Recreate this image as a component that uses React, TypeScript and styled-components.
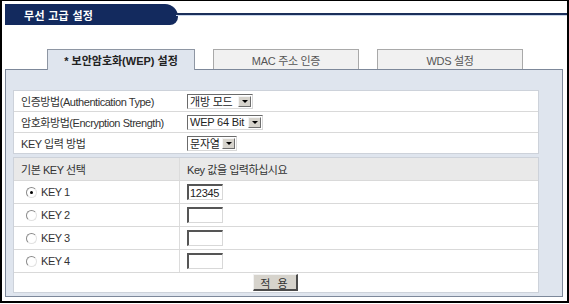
import styled, { createGlobalStyle } from 'styled-components'

const GlobalStyle = createGlobalStyle`
  body {
    margin: 0;
    background: #fff;
    font-family: "Liberation Sans", "Noto Sans CJK KR", sans-serif;
    font-size: 11px;
    color: #333;
  }
`;

const Frame = styled.div`
  width: 569px;
  height: 303px;
  box-sizing: border-box;
  border: 2px solid #000;
  border-top-width: 1px;
  background: #fff;
`;

const Header = styled.div`
  display: flex;
  align-items: center;
  margin-top: 3px;
  padding-left: 3px;
`;

const TitleBand = styled.div`
  width: 173px;
  height: 21px;
  box-sizing: border-box;
  padding-left: 19px;
  display: flex;
  align-items: center;
  background: #132a5e;
  color: #fff;
  font-weight: bold;
  letter-spacing: 0.3px;
  border-radius: 0 16px 10px 0;
  flex-shrink: 0;
`;

const TitleLine = styled.div`
  flex: 1;
  height: 2px;
  background: #1b2f5a;
  border-bottom: 1px solid #c9d6ea;
  margin-left: -2px;
`;

const TabRow = styled.div`
  display: flex;
  gap: 18px;
  margin-top: 24px;
  padding-left: 45px;
  height: 20px;
  position: relative;
  z-index: 1;
`;

const Tab = styled.div<{ $active?: boolean }>`
  width: ${({ $active }) => ($active ? 148 : 146)}px;
  box-sizing: border-box;
  display: flex;
  align-items: center;
  justify-content: center;
  border: 1px solid ${({ $active }) => ($active ? '#8e96a3' : '#a9a9a9')};
  border-bottom: none;
  background: ${({ $active }) => ($active ? '#dfe5ee' : '#f1f1f1')};
  color: ${({ $active }) => ($active ? '#222' : '#555')};
  font-weight: ${({ $active }) => ($active ? 'bold' : 'normal')};
  letter-spacing: ${({ $active }) => ($active ? '0' : '-0.3px')};
  height: ${({ $active }) => ($active ? 21 : 20)}px;
`;

const Panel = styled.div`
  margin-left: 3px;
  width: 558px;
  height: 228px;
  box-sizing: border-box;
  border: 1px solid #7d889a;
  background: #dfe5ee;
  padding: 20px 23px 3px 7px;
  display: flex;
  flex-direction: column;
  gap: 3px;
`;

const Table = styled.div`
  background: #fff;
  border: 1px solid #cdd2da;
`;

const Row = styled.div<{ $h: number; $head?: boolean }>`
  display: grid;
  grid-template-columns: 166px 1fr;
  height: ${({ $h }) => $h}px;
  box-sizing: border-box;
  background: ${({ $head }) => ($head ? '#e9e9e9' : '#fff')};
  & + & {
    border-top: 1px solid #d9d9d9;
  }
`;

const Cell = styled.div<{ $divider?: boolean; $pad?: number }>`
  display: flex;
  align-items: center;
  padding-left: ${({ $pad }) => $pad ?? 7}px;
  letter-spacing: -0.45px;
  color: #333;
  border-right: ${({ $divider }) => ($divider ? '1px solid #dcdcdc' : 'none')};
`;

const ButtonRow = styled.div`
  display: flex;
  justify-content: center;
  align-items: center;
  height: 20px;
  box-sizing: border-box;
  border-top: 1px solid #d9d9d9;
`;

const SelectBox = styled.div<{ $w: number }>`
  width: ${({ $w }) => $w}px;
  height: 15px;
  box-sizing: border-box;
  display: flex;
  align-items: center;
  justify-content: space-between;
  background: #fff;
  border-top: 1px solid #6b6b6b;
  border-left: 1px solid #6b6b6b;
  border-right: 1px solid #d8d8d8;
  border-bottom: 1px solid #d8d8d8;
  padding-left: 2px;
  padding-right: 1px;
  letter-spacing: -0.2px;
  color: #222;
`;

const Arrow = styled.span`
  width: 13px;
  height: 11px;
  box-sizing: border-box;
  background: #d6d3cc;
  border-top: 1px solid #f4f4f4;
  border-left: 1px solid #f4f4f4;
  border-right: 1px solid #6e6e6e;
  border-bottom: 1px solid #6e6e6e;
  display: flex;
  align-items: center;
  justify-content: center;
  &::after {
    content: '';
    border-left: 3px solid transparent;
    border-right: 3px solid transparent;
    border-top: 3px solid #000;
  }
`;

const KeyInput = styled.input`
  width: 36px;
  height: 16px;
  box-sizing: border-box;
  margin: 0;
  padding: 0 1px;
  font: inherit;
  font-size: 11px;
  letter-spacing: -0.3px;
  color: #222;
  border-top: 2px solid #555;
  border-left: 2px solid #555;
  border-right: 1px solid #d8d8d8;
  border-bottom: 1px solid #d8d8d8;
  outline: none;
  background: #fff;
`;

const Radio = styled.span<{ $on?: boolean }>`
  width: 9px;
  height: 9px;
  margin-right: 4px;
  border-radius: 50%;
  border: 1px solid #8a8a8a;
  border-right-color: #e2e2e2;
  border-bottom-color: #e2e2e2;
  background: #fff;
  display: inline-flex;
  align-items: center;
  justify-content: center;
  &::after {
    content: '';
    width: 3px;
    height: 3px;
    border-radius: 50%;
    background: ${({ $on }) => ($on ? '#000' : 'transparent')};
  }
`;

const ApplyButton = styled.button`
  width: 45px;
  height: 17px;
  margin: 0 0 0 -1px;
  padding: 0;
  font: inherit;
  font-size: 11px;
  letter-spacing: 2px;
  color: #333;
  background: #d6d3cc;
  border-top: 1px solid #f2f2f2;
  border-left: 1px solid #f2f2f2;
  border-right: 2px solid #4b4b4b;
  border-bottom: 2px solid #4b4b4b;
`;

const tabs = ['* 보안암호화(WEP) 설정', 'MAC 주소 인증', 'WDS 설정'];

const settings = [
  { label: '인증방법(Authentication Type)', value: '개방 모드', width: 66 },
  { label: '암호화방법(Encryption Strength)', value: 'WEP 64 Bit', width: 76 },
  { label: 'KEY 입력 방법', value: '문자열', width: 50 },
];

const keys = [
  { name: 'KEY 1', value: '12345', on: true },
  { name: 'KEY 2', value: '' },
  { name: 'KEY 3', value: '' },
  { name: 'KEY 4', value: '' },
];

function App() {
  return (
    <>
      <GlobalStyle />
      <Frame>
        <Header>
          <TitleBand>무선 고급 설정</TitleBand>
          <TitleLine />
        </Header>
        <TabRow>
          {tabs.map((t, i) => (
            <Tab key={t} $active={i === 0}>{t}</Tab>
          ))}
        </TabRow>
        <Panel>
          <Table>
            {settings.map((s, i) => (
              <Row key={s.label} $h={i === 0 ? 20 : 21}>
                <Cell>{s.label}</Cell>
                <Cell>
                  <SelectBox $w={s.width}>
                    {s.value}
                    <Arrow />
                  </SelectBox>
                </Cell>
              </Row>
            ))}
          </Table>
          <Table>
            <Row $h={22} $head>
              <Cell $divider>기본 KEY 선택</Cell>
              <Cell>Key 값을 입력하십시요</Cell>
            </Row>
            {keys.map((k) => (
              <Row key={k.name} $h={23}>
                <Cell $divider $pad={12}>
                  <Radio $on={k.on} />
                  {k.name}
                </Cell>
                <Cell>
                  <KeyInput defaultValue={k.value} />
                </Cell>
              </Row>
            ))}
            <ButtonRow>
              <ApplyButton>적 용</ApplyButton>
            </ButtonRow>
          </Table>
        </Panel>
      </Frame>
    </>
  )
}

export default App
